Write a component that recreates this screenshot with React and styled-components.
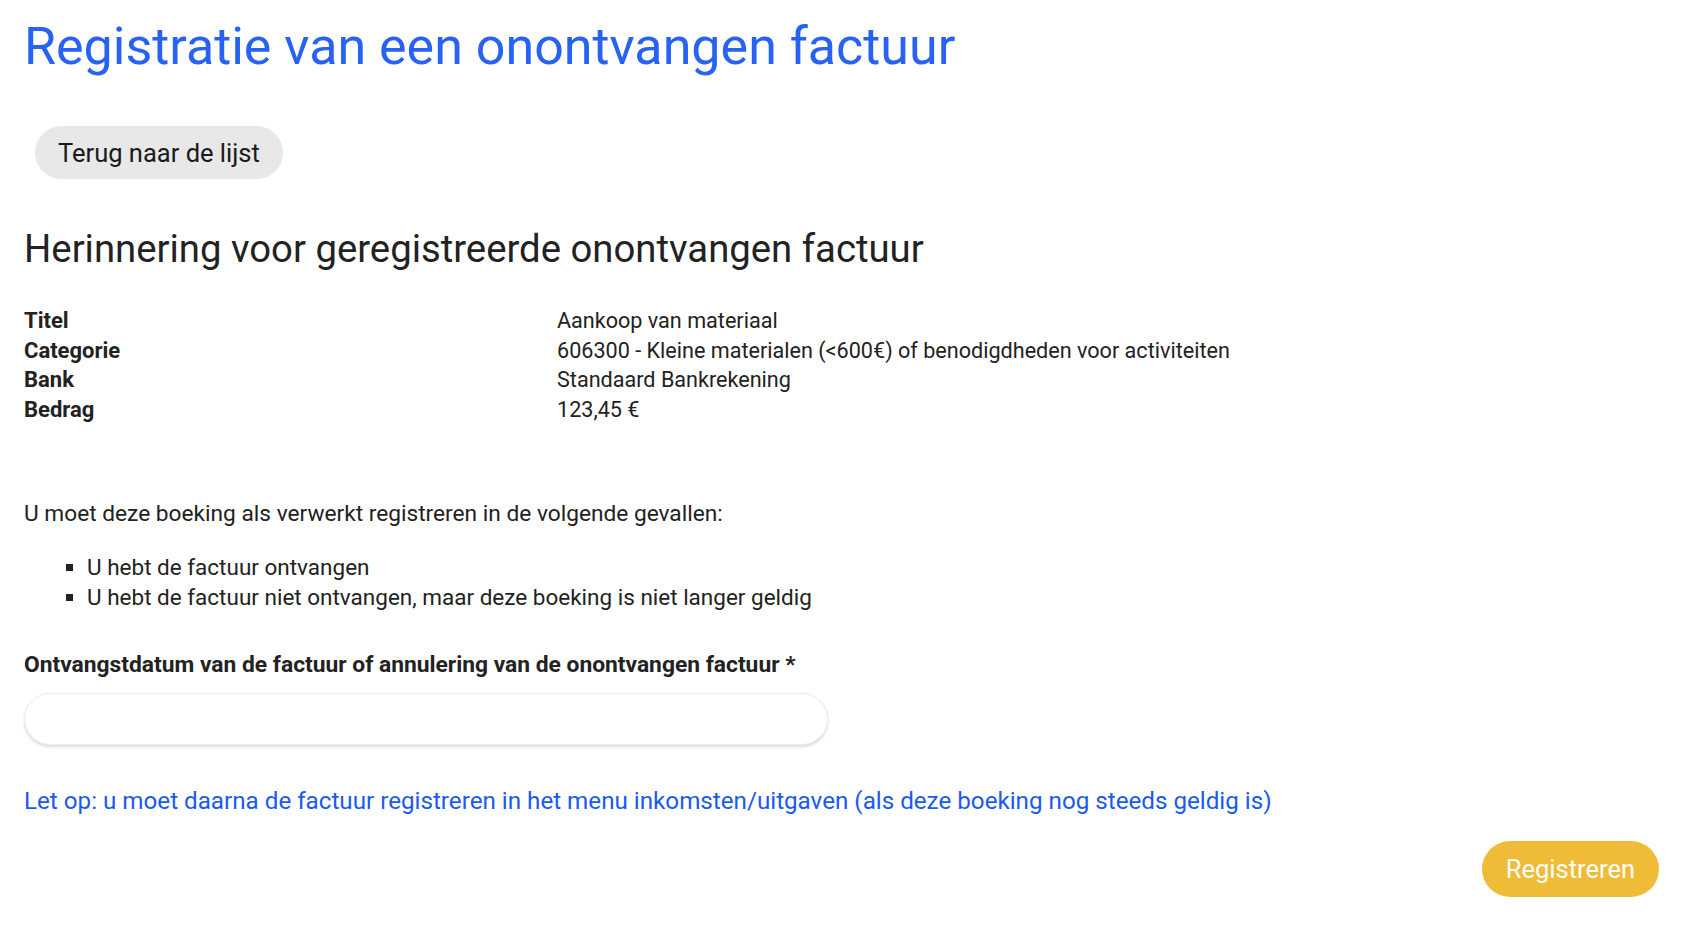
import styled, { createGlobalStyle } from "styled-components";

const GlobalStyle = createGlobalStyle`
  html, body {
    margin: 0;
    padding: 0;
    background: #ffffff;
  }

  body {
    font-family: Roboto, "Noto Sans", Arial, sans-serif;
    color: #222222;
  }
`;

const Page = styled.div`
  display: flex;
  flex-direction: column;
  padding: 14px 29px 30px 24px;
`;

const Title = styled.h1`
  margin: 0;
  font-size: 52px;
  font-weight: 400;
  line-height: 66px;
  color: #2862f5;
`;

const BackButton = styled.button`
  align-self: flex-start;
  margin: 46px 0 0 11px;
  height: 53px;
  padding: 0 23px;
  border: none;
  border-radius: 27px;
  background: #e8e8e8;
  color: #1a1a1a;
  font-family: inherit;
  font-size: 25.5px;
  cursor: pointer;
`;

const Heading = styled.h2`
  margin: 46px 0 0;
  font-size: 38.3px;
  font-weight: 400;
  line-height: 48px;
  color: #222222;
`;

const DetailGrid = styled.dl`
  display: grid;
  grid-template-columns: 533px 1fr;
  margin: 33px 0 0;
  font-size: 21.6px;
  line-height: 29.5px;
`;

const Label = styled.dt`
  font-size: 22px;
  font-weight: 700;
`;

const Value = styled.dd`
  margin: 0;
`;

const Text = styled.p`
  margin: 75px 0 0;
  font-size: 22.7px;
  line-height: 30px;
`;

const Cases = styled.ul`
  margin: 23px 0 0;
  padding-left: 63px;
  list-style: square;
  font-size: 22.5px;
  line-height: 30px;
`;

const FieldLabel = styled.label`
  margin-top: 38px;
  font-size: 22.8px;
  font-weight: 700;
  line-height: 30px;
`;

const Input = styled.input`
  box-sizing: border-box;
  width: 804px;
  height: 52px;
  margin-top: 13px;
  padding: 0 22px;
  border: 1px solid #ececec;
  border-radius: 26px;
  background: #ffffff;
  box-shadow: 0 2px 3px rgba(0, 0, 0, 0.14);
  font-family: inherit;
  font-size: 20px;
  outline: none;
`;

const Note = styled.p`
  margin: 41px 0 0;
  font-size: 24.2px;
  line-height: 30px;
  color: #1a5af0;
`;

const Footer = styled.div`
  display: flex;
  justify-content: flex-end;
  margin-top: 25px;
`;

const SubmitButton = styled.button`
  height: 56px;
  padding: 0 24px;
  border: none;
  border-radius: 28px;
  background: #f0bc38;
  color: #ffffff;
  font-family: inherit;
  font-size: 25.5px;
  cursor: pointer;
`;

const details = [
  ["Titel", "Aankoop van materiaal"],
  ["Categorie", "606300 - Kleine materialen (<600€) of benodigdheden voor activiteiten"],
  ["Bank", "Standaard Bankrekening"],
  ["Bedrag", "123,45 €"],
];

const App = () => {
  return (
    <>
      <GlobalStyle />
      <Page>
        <Title>Registratie van een onontvangen factuur</Title>
        <BackButton>Terug naar de lijst</BackButton>

        <Heading>Herinnering voor geregistreerde onontvangen factuur</Heading>
        <DetailGrid>
          {details.flatMap(([label, value]) => [
            <Label key={label}>{label}</Label>,
            <Value key={label + "-value"}>{value}</Value>,
          ])}
        </DetailGrid>

        <Text>U moet deze boeking als verwerkt registreren in de volgende gevallen:</Text>
        <Cases>
          <li>U hebt de factuur ontvangen</li>
          <li>U hebt de factuur niet ontvangen, maar deze boeking is niet langer geldig</li>
        </Cases>

        <FieldLabel htmlFor="datum">
          Ontvangstdatum van de factuur of annulering van de onontvangen factuur *
        </FieldLabel>
        <Input id="datum" type="text" />

        <Note>
          Let op: u moet daarna de factuur registreren in het menu inkomsten/uitgaven (als deze boeking nog steeds geldig is)
        </Note>

        <Footer>
          <SubmitButton>Registreren</SubmitButton>
        </Footer>
      </Page>
    </>
  );
};

export default App;
